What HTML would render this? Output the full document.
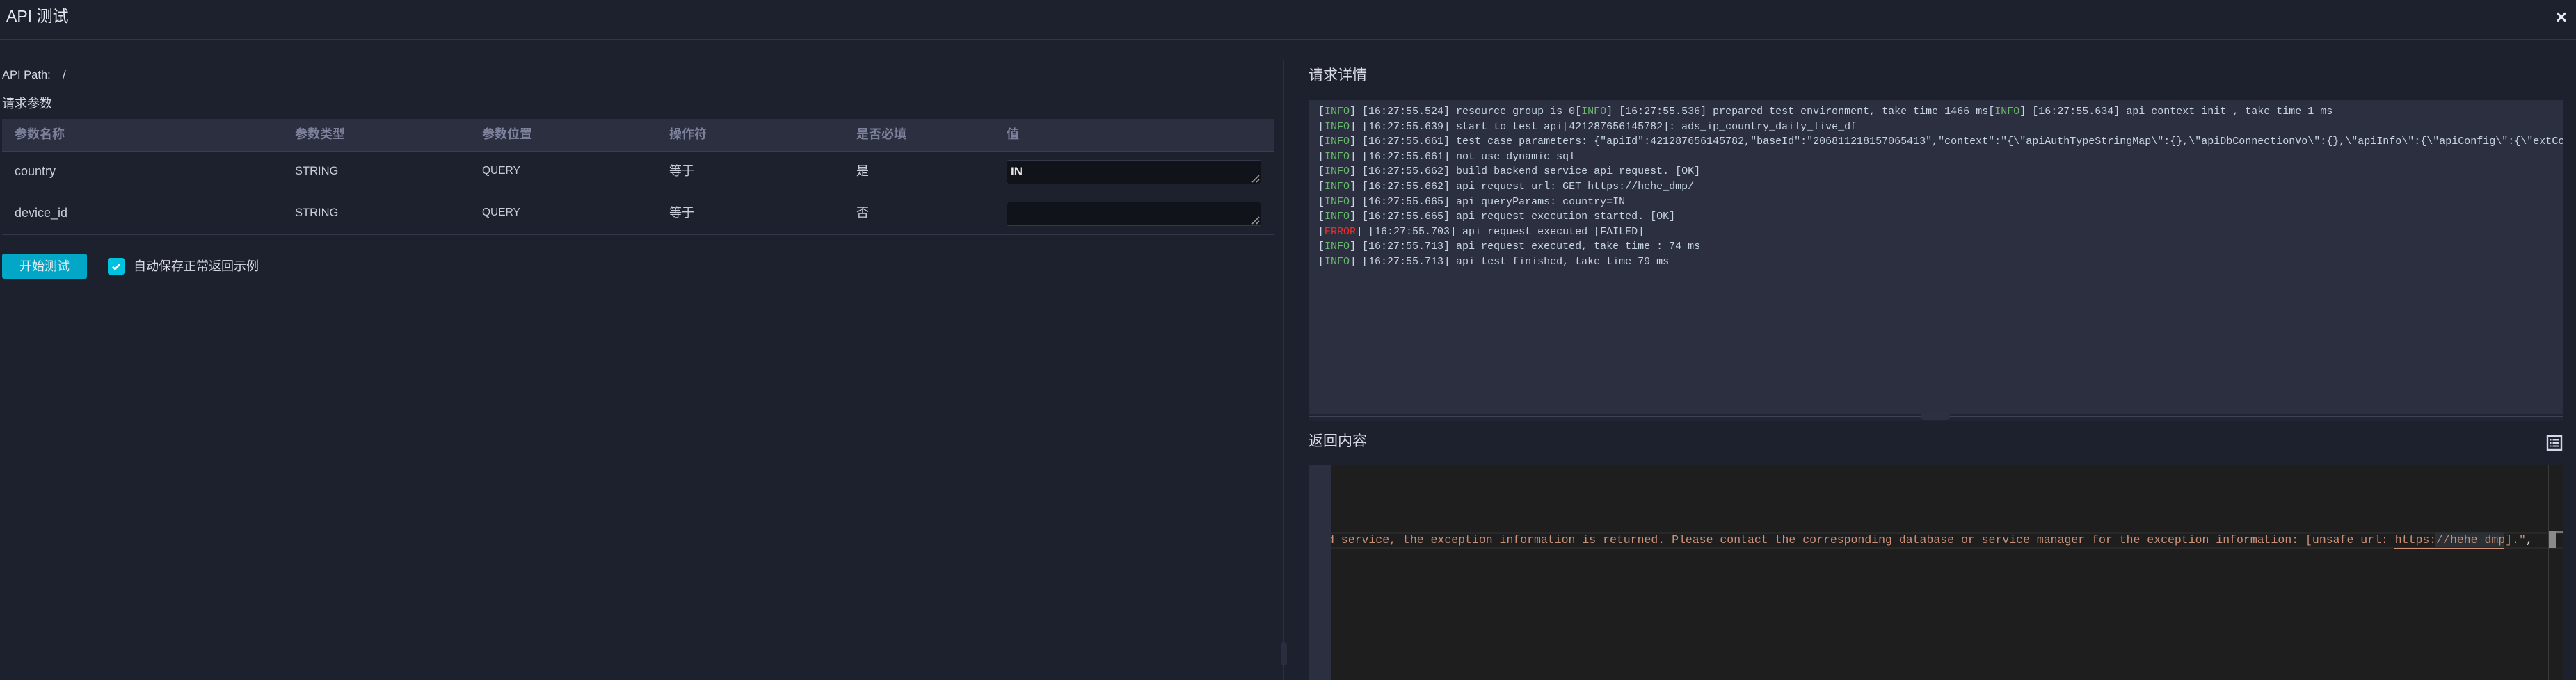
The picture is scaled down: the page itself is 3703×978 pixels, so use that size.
<!DOCTYPE html>
<html>
<head>
<meta charset="utf-8">
<style>
html,body{margin:0;padding:0;width:3703px;height:978px;overflow:hidden;background:#1d202d;}
body{position:relative;font-family:"Liberation Sans","Noto Sans CJK SC",sans-serif;color:#d6d8e2;font-size:18px;}
div,span.a{position:absolute;}
.t{white-space:pre;line-height:24px;height:24px;}
.h{font-weight:700;color:#7d809a;top:181px;}
.c{color:#c9ccd8;}
.r1{top:234px;}
.r2{top:294px;}
.s{font-size:16.5px;}
.q{font-size:15.5px;}
.ta{left:1447px;width:364px;height:33px;background:#10131a;border:1px solid #34374a;border-radius:3px;}
.log{left:14px;font-family:"Liberation Mono",monospace;font-size:15px;line-height:21px;height:21px;white-space:pre;color:#c6d5e2;}
.log i{font-style:normal;color:#69b96c;}
.log b{font-weight:400;color:#ee2c2c;}
</style>
</head>
<body>
<div class="t" style="left:9px;top:11px;font-size:23px;color:#e6e8f0;">API 测试</div>
<div style="left:0;top:56px;width:3703px;height:1px;background:#34374a;"></div>
<svg style="position:absolute;left:3674px;top:17px" width="16" height="15" viewBox="0 0 16 15"><path d="M2 1.5L14 13.5M14 1.5L2 13.5" stroke="#e8eaf2" stroke-width="3" fill="none"/></svg>

<div class="t" style="left:3px;top:96px;font-size:16.5px;">API Path:</div>
<div class="t" style="left:90px;top:96px;font-size:17px;">/</div>
<div class="t" style="left:3px;top:137px;">请求参数</div>

<div style="left:3px;top:171px;width:1829px;height:46px;background:#2c2f40;"></div>
<div class="t h" style="left:21px;">参数名称</div>
<div class="t h" style="left:424px;">参数类型</div>
<div class="t h" style="left:693px;">参数位置</div>
<div class="t h" style="left:962px;">操作符</div>
<div class="t h" style="left:1231px;">是否必填</div>
<div class="t h" style="left:1447px;">值</div>
<div style="left:3px;top:217px;width:1829px;height:1px;background:#3a3d50;"></div>
<div style="left:3px;top:277px;width:1829px;height:1px;background:#34374a;"></div>
<div style="left:3px;top:337px;width:1829px;height:1px;background:#34374a;"></div>

<div class="t c r1" style="left:21px;">country</div>
<div class="t c r1 s" style="left:424px;">STRING</div>
<div class="t c r1 q" style="left:693px;">QUERY</div>
<div class="t c r1" style="left:962px;">等于</div>
<div class="t c r1" style="left:1231px;">是</div>
<div class="t c r2" style="left:21px;">device_id</div>
<div class="t c r2 s" style="left:424px;">STRING</div>
<div class="t c r2 q" style="left:693px;">QUERY</div>
<div class="t c r2" style="left:962px;">等于</div>
<div class="t c r2" style="left:1231px;">否</div>

<div class="ta" style="top:230px;"></div>
<div class="t" style="left:1453px;top:235px;color:#e8e8e8;font-size:17px;font-weight:700;">IN</div>
<svg style="position:absolute;left:1799px;top:251px" width="12" height="12" viewBox="0 0 12 12"><path d="M1 11L11 1M7 11L11 7" stroke="#999" stroke-width="1.6" fill="none"/></svg>
<div class="ta" style="top:290px;"></div>
<svg style="position:absolute;left:1799px;top:311px" width="12" height="12" viewBox="0 0 12 12"><path d="M1 11L11 1M7 11L11 7" stroke="#999" stroke-width="1.6" fill="none"/></svg>

<div style="left:3px;top:365px;width:122px;height:36px;background:#02a6c7;border-radius:3px;"></div>
<div class="t" style="left:3px;top:371px;width:122px;text-align:center;color:#e8eef2;">开始测试</div>
<div style="left:155px;top:371px;width:24px;height:24px;background:#00c1de;border-radius:3px;"></div>
<svg style="position:absolute;left:155px;top:371px" width="24" height="24" viewBox="0 0 24 24"><path d="M7 12.5L10.5 16L17 9" stroke="#fff" stroke-width="2.6" fill="none"/></svg>
<div class="t" style="left:192px;top:371px;color:#d8dae4;">自动保存正常返回示例</div>

<div style="left:1845px;top:87px;width:1px;height:891px;background:#2c2f40;"></div>
<div style="left:1841px;top:924px;width:9px;height:33px;background:#2a2d3d;border-radius:4px;"></div>

<div class="t" style="left:1881px;top:97px;font-size:21px;color:#d8dae4;">请求详情</div>

<div style="left:1881px;top:144px;width:1804px;height:452px;background:#2c2f40;overflow:hidden;">
<div class="log" style="top:6px;">[<i>INFO</i>] [16:27:55.524] resource group is 0[<i>INFO</i>] [16:27:55.536] prepared test environment, take time 1466 ms[<i>INFO</i>] [16:27:55.634] api context init , take time 1 ms</div>
<div class="log" style="top:28px;">[<i>INFO</i>] [16:27:55.639] start to test api[421287656145782]: ads_ip_country_daily_live_df</div>
<div class="log" style="top:49px;">[<i>INFO</i>] [16:27:55.661] test case parameters: {"apiId":421287656145782,"baseId":"206811218157065413","context":"{\"apiAuthTypeStringMap\":{},\"apiDbConnectionVo\":{},\"apiInfo\":{\"apiConfig\":{\"extConfig\":{}}}}"}</div>
<div class="log" style="top:71px;">[<i>INFO</i>] [16:27:55.661] not use dynamic sql</div>
<div class="log" style="top:92px;">[<i>INFO</i>] [16:27:55.662] build backend service api request. [OK]</div>
<div class="log" style="top:114px;">[<i>INFO</i>] [16:27:55.662] api request url: GET https://hehe_dmp/</div>
<div class="log" style="top:136px;">[<i>INFO</i>] [16:27:55.665] api queryParams: country=IN</div>
<div class="log" style="top:157px;">[<i>INFO</i>] [16:27:55.665] api request execution started. [OK]</div>
<div class="log" style="top:179px;">[<b>ERROR</b>] [16:27:55.703] api request executed [FAILED]</div>
<div class="log" style="top:200px;">[<i>INFO</i>] [16:27:55.713] api request executed, take time : 74 ms</div>
<div class="log" style="top:222px;">[<i>INFO</i>] [16:27:55.713] api test finished, take time 79 ms</div>
</div>

<div style="left:1881px;top:596px;width:1804px;height:10px;background:#212431;"></div>
<div style="left:1881px;top:599px;width:1804px;height:1px;background:#3f4254;"></div>
<div style="left:2762px;top:594px;width:41px;height:10px;background:#2d3040;border-radius:4px;"></div>

<div class="t" style="left:1881px;top:623px;font-size:21px;color:#d8dae4;">返回内容</div>
<svg style="position:absolute;left:3660px;top:625px" width="24" height="24" viewBox="0 0 24 24" fill="none" stroke="#d5d8e8"><rect x="2" y="2" width="20" height="20" stroke-width="2.4"/><path d="M5.5 7.5H7.5M9.5 7.5H18.5M5.5 12H7.5M9.5 12H18.5M5.5 16.5H7.5M9.5 16.5H18.5" stroke-width="2"/></svg>

<div style="left:1881px;top:669px;width:32px;height:309px;background:#2c2f40;"></div>
<div style="left:1913px;top:669px;width:1771px;height:309px;background:#1e1e1e;overflow:hidden;">
  <div style="left:0;top:96px;width:1771px;height:3px;background:#282828;"></div>
  <div style="left:0;top:117px;width:1771px;height:3px;background:#282828;"></div>
  <div style="left:1587px;top:96px;width:100px;height:22px;background:#2a3034;"></div>
  <div style="left:-5px;top:96px;height:24px;line-height:24px;white-space:pre;font-family:'Liberation Mono',monospace;font-size:16.5px;color:#ce9178;">d service, the exception information is returned. Please contact the corresponding database or service manager for the exception information: [unsafe url: https://hehe_dmp].&quot;<span style="color:#d4d4d4">,</span></div>
  <div style="left:1528px;top:119px;width:159px;height:1px;background:#ce9178;"></div>
  <div style="left:1750px;top:0;width:1px;height:309px;background:#3a3a3a;"></div>
  <div style="left:1751px;top:94px;width:20px;height:4px;background:#777;"></div>
  <div style="left:1751px;top:95px;width:10px;height:24px;background:#8a8a8a;"></div>
</div>
</body>
</html>
